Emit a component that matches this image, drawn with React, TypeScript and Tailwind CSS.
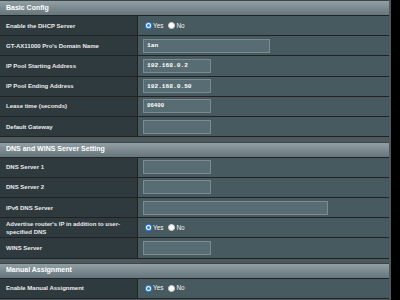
import React from "react";

const sans = { fontFamily: '"Liberation Sans", Arial, sans-serif' };

function Radio({ checked }: { checked: boolean }) {
  if (checked) {
    return (
      <span className="w-[7px] h-[7px] rounded-full bg-[#2f7fe6] flex items-center justify-center shrink-0">
        <span className="w-[5px] h-[5px] rounded-full bg-white flex items-center justify-center">
          <span className="w-[3px] h-[3px] rounded-full bg-[#2f7fe6]" />
        </span>
      </span>
    );
  }
  return <span className="w-[7px] h-[7px] rounded-full bg-white border border-[#d0d0d0] shrink-0" />;
}

function YesNo() {
  return (
    <div className="flex items-center ml-[2px] text-[6.4px] text-[#f4f4f4]">
      <Radio checked />
      <span className="ml-[1px]">Yes</span>
      <span className="ml-[5px]" />
      <Radio checked={false} />
      <span className="ml-[1px]">No</span>
    </div>
  );
}

function Input({ w, value, small }: { w: string; value?: string; small?: boolean }) {
  return (
    <div
      className={`${w} h-[14px] bg-[#576D73] border border-[#7b8c91] flex items-center pl-[3px] text-white font-bold ${small ? "text-[5.7px]" : "text-[6.2px]"}`}
      style={{ fontFamily: '"Liberation Mono", "DejaVu Sans Mono", monospace' }}
    >
      {value}
    </div>
  );
}

function Row({ label, children }: { label: React.ReactNode; children?: React.ReactNode }) {
  return (
    <div className="flex h-[20.2px] border-b border-[#222]">
      <div className="w-[138px] shrink-0 bg-[#2F3A3E] border-r border-[#222] flex items-center pl-[6px] text-[6px] font-bold leading-[8px] text-[#ececec]">
        {label}
      </div>
      <div className="flex-1 bg-[#475A5F] flex items-center pl-[5px]">{children}</div>
    </div>
  );
}

function Header({ title }: { title: string }) {
  return (
    <div className="h-[15px] border-b border-[#222] bg-gradient-to-b from-[#92A0A5] to-[#66757C] flex items-center pl-[6px] text-[7px] font-bold text-white">
      {title}
    </div>
  );
}

export default function App() {
  return (
    <div className="w-[400px] h-[300px] bg-black flex overflow-hidden" style={sans}>
      <div className="w-[391px] h-[300px] bg-[#4D595D] flex flex-col">
        <div className="w-[389px] border-t border-[#3d4548] flex flex-col">
          <Header title="Basic Config" />
          <Row label="Enable the DHCP Server">
            <YesNo />
          </Row>
          <Row label="GT-AX11000 Pro's Domain Name">
            <Input w="w-[127px]" value="1an" />
          </Row>
          <Row label="IP Pool Starting Address">
            <Input w="w-[68px]" value="192.168.0.2" />
          </Row>
          <Row label="IP Pool Ending Address">
            <Input w="w-[68px]" value="192.168.0.50" />
          </Row>
          <Row label="Lease time (seconds)">
            <Input w="w-[68px]" value="86400" small />
          </Row>
          <Row label="Default Gateway">
            <Input w="w-[68px]" />
          </Row>
        </div>
        <div className="h-[4.5px] shrink-0" />
        <div className="w-[389px] border-t border-[#3d4548] flex flex-col">
          <Header title="DNS and WINS Server Setting" />
          <Row label="DNS Server 1">
            <Input w="w-[68px]" />
          </Row>
          <Row label="DNS Server 2">
            <Input w="w-[68px]" />
          </Row>
          <Row label="IPv6 DNS Server">
            <Input w="w-[185px]" />
          </Row>
          <Row
            label={
              <span>
                Advertise router's IP in addition to user-
                <br />
                specified DNS
              </span>
            }
          >
            <YesNo />
          </Row>
          <Row label="WINS Server">
            <Input w="w-[68px]" />
          </Row>
        </div>
        <div className="h-[4px] shrink-0" />
        <div className="w-[389px] border-t border-[#3d4548] flex flex-col">
          <Header title="Manual Assignment" />
          <Row label="Enable Manual Assignment">
            <YesNo />
          </Row>
        </div>
      </div>
    </div>
  );
}
